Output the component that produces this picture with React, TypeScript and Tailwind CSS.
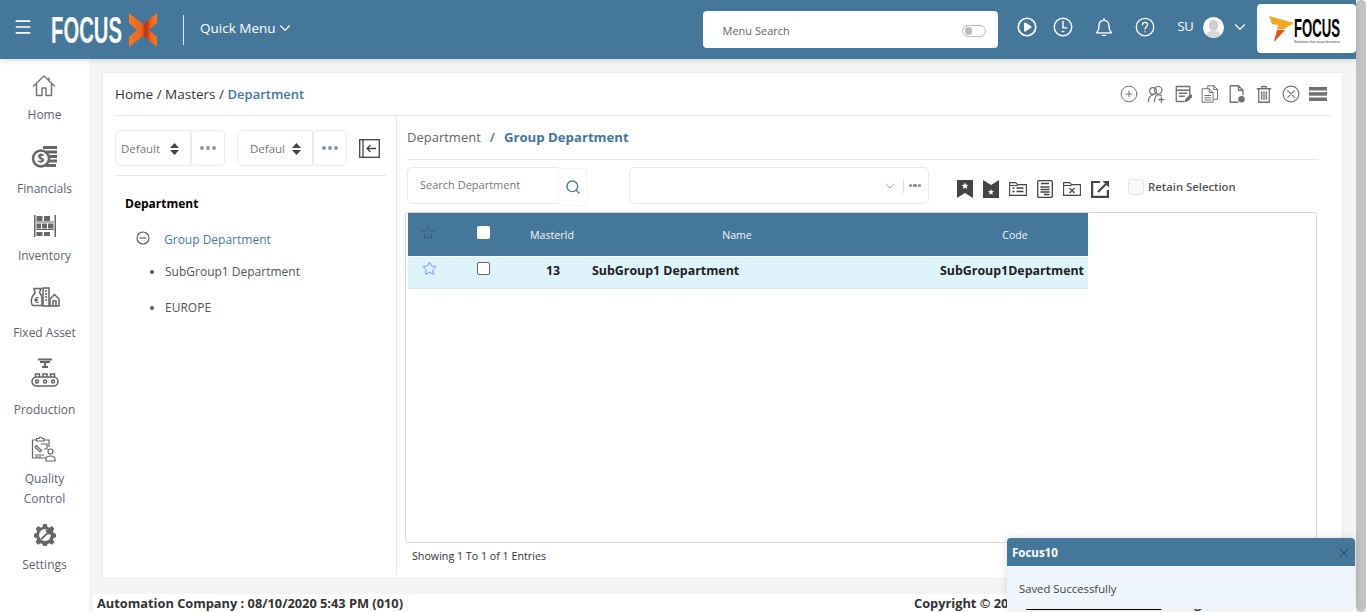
import { ChevronDown, Menu, Search, Star, X } from "lucide-react";
import type { ReactNode } from "react";

const Ico = ({ w = 24, h = 24, vb = "0 0 24 24", sw = 1.5, children }: { w?: number; h?: number; vb?: string; sw?: number; children: ReactNode }) => (
  <svg width={w} height={h} viewBox={vb} fill="none" stroke="currentColor" strokeWidth={sw} strokeLinecap="round" strokeLinejoin="round">
    {children}
  </svg>
);

const HomeIcon = () => (
  <Ico w={26} h={24}>
    <path d="M1.500 12 12 2l10.500 10M4.500 10v11.500h5.500V14h4v7.500h5.500V10M17 4v3" />
  </Ico>
);
const FinancialsIcon = () => (
  <svg width={28} height={24} viewBox="0 0 28 24">
    <g fill="#666">
      <rect x="12" y="1" width="14" height="3" />
      <rect x="15" y="5.500" width="11" height="3" />
      <rect x="18" y="10" width="8" height="3" />
      <rect x="18" y="14.500" width="8" height="3" />
      <rect x="15" y="19" width="10" height="3" />
    </g>
    <circle cx="10" cy="13.500" r="8" fill="#fff" stroke="#666" strokeWidth="2.500" />
    <text x="10" y="18" textAnchor="middle" fontSize="12" fontWeight="700" fill="#666" fontFamily="'Open Sans',sans-serif">$</text>
  </svg>
);
const InventoryIcon = () => (
  <svg width={24} height={24} viewBox="0 0 24 24" fill="#666">
    <rect x="1" y="1" width="1.500" height="22" />
    <rect x="21.500" y="1" width="1.500" height="22" />
    <rect x="3.500" y="2" width="6" height="5" />
    <rect x="11" y="2" width="6" height="5" />
    <rect x="3" y="7.500" width="18" height="1" />
    <rect x="3.500" y="9.500" width="4.500" height="5" />
    <rect x="9" y="9.500" width="5" height="5" />
    <rect x="15" y="9.500" width="5.500" height="5" />
    <rect x="3" y="15" width="18" height="1" />
    <rect x="3.500" y="18" width="6" height="4" />
    <rect x="11" y="18" width="6" height="4" />
  </svg>
);
const FixedAssetIcon = () => (
  <svg width={30} height={20} viewBox="0 0 30 20" fill="none" stroke="#666" strokeWidth="1.500">
    <path d="M4 1.500h7l-1.500 4c2 2 2.500 4 2.500 7v6H3c-2-1-2-5-1-8 .5-2 2-3 3-4.500z" />
    <rect x="13" y="1" width="6" height="18" />
    <path d="M15 4h2M15 7h2M15 10h2M15 13h2" />
    <path d="M20 12l4.500-4.500L29 12v7h-9zM23 14h3v5h-3z" />
    <text x="6.500" y="16" fontSize="8" fontWeight="700" fill="#666" stroke="none" textAnchor="middle" fontFamily="'Open Sans',sans-serif">€</text>
  </svg>
);
const ProductionIcon = () => (
  <svg width={28} height={30} viewBox="0 0 28 30" fill="none" stroke="#666" strokeWidth="1.500">
    <path d="M7 1.500h14M9 4h10M14 4v5M11 9h6" strokeWidth="2" />
    <path d="M4.500 19v-3h4v3M12 19v-3h4v3M19.500 19v-3h4v3" />
    <rect x="1" y="19" width="26" height="9" rx="4.500" />
    <circle cx="6" cy="23.500" r="1.500" />
    <circle cx="14" cy="23.500" r="1.500" />
    <circle cx="22" cy="23.500" r="1.500" />
  </svg>
);
const QualityIcon = () => (
  <svg width={26} height={26} viewBox="0 0 26 26" fill="none" stroke="#666" strokeWidth="1.200">
    <path d="M15 22H1.500V4h4M13 4h5v7" />
    <path d="M5.500 5V2.500h2.500a1.500 1.500 0 0 1 3 0H13V5z" />
    <path d="M4 11l5 5 1.500-1.500-5-5zM4 19h9M4 21h6M10 8h6v5h-3" />
    <circle cx="19.500" cy="15.500" r="2.500" />
    <path d="M15 25v-2c0-2 2-3 4.500-3s4.500 1 4.500 3v2z" />
  </svg>
);
const SettingsIcon = () => (
  <svg width={22} height={22} viewBox="0 0 24 24">
    <path fill="#666" d="M10 0h4l.6 3 2.300 1 2.600-1.700 2.800 2.800L20.600 7.700l1 2.300 2.400.6v3.800l-2.400.6-1 2.300 1.700 2.600-2.800 2.800-2.600-1.700-2.300 1-.6 2h-4l-.6-2-2.300-1-2.600 1.700-2.800-2.800L3.400 17.300l-1-2.300-2.400-.6v-3.800l2.400-.6 1-2.300-1.700-2.600 2.800-2.800L7.100 4l2.300-1z" />
    <circle cx="12" cy="12" r="6.500" fill="#fff" />
    <path d="M8 16.500l6-6M14 7a3.500 3.500 0 0 1 3.500 3.500L15 10z" stroke="#666" strokeWidth="2.200" fill="#666" />
  </svg>
);

const BookmarkStar = () => (
  <svg width={16} height={18} viewBox="0 0 16 18">
    <path fill="#444" d="M0 0h16v18l-8-5-8 5z" />
    <path fill="#fff" d="m8 2.500 1 2.300 2.400.2-1.800 1.600.6 2.400L8 7.700 5.800 9l.6-2.400L4.600 5 7 4.800z" />
  </svg>
);
const BookmarkOut = () => (
  <svg width={16} height={18} viewBox="0 0 16 18">
    <path fill="#444" d="M0 0l8 5 8-5v18H0z" />
    <path fill="#fff" d="m8 9 .8 2 2.200.2-1.700 1.400.5 2.200L8 13.700l-1.800 1.100.5-2.200L5 11.200l2.200-.2z" />
  </svg>
);

const Breadcrumb = () => (
  <div className="flex h-[43px] mx-[12px] shrink-0 items-center justify-between border-b border-[#e8e8e8] pr-[3px]">
    <p className="text-[13.5px] text-[#333]">
      Home / Masters / <span className="font-semibold text-[13px] text-[#45779b]">Department</span>
    </p>
    <div className="flex items-center gap-[9px] text-[#707070] mt-[-1px]">
      <Ico w={18} h={18} sw={1.300}>
        <circle cx="12" cy="12" r="10.500" />
        <path d="M12 8v8M8 12h8" />
      </Ico>
      <Ico w={18} h={18} sw={1.600}>
        <circle cx="15" cy="7" r="5" />
        <circle cx="8" cy="8" r="4.500" />
        <path d="M2 22c0-5 2-8 6-9M10 22c0-4 1-7 4-9 2 0 4 0 5 1M19 16v7M15.500 19.500h7" />
      </Ico>
      <Ico w={18} h={18} sw={1.700}>
        <path d="M13 22H3V2h18v10M3 7h18M7 11h10M7 15h7" />
        <path d="m15 22 1-3 6-6 2 2-6 6z" fill="currentColor" />
      </Ico>
      <Ico w={18} h={18} sw={1.300}>
        <path d="M9 5V1h8l5 5v13h-5M17 1v5h5" />
        <path d="M2 5h9l5 5v13H2zM11 5v5h5M5 14h8M5 17h8M5 20h8" />
      </Ico>
      <Ico w={18} h={18} sw={1.700}>
        <path d="M13 23H3V1h11l6 6v6M14 1v6h6" />
        <circle cx="18" cy="19" r="3.500" fill="currentColor" />
      </Ico>
      <Ico w={18} h={18} sw={1.700}>
        <path d="M3 5h18M9 5V2h6v3M5 5v18h14V5M9 9v10M12 9v10M15 9v10" />
      </Ico>
      <Ico w={18} h={18} sw={1.500}>
        <circle cx="12" cy="12" r="10.500" />
        <path d="m7.500 7.500 9 9M16.500 7.500l-9 9" />
      </Ico>
      <svg width={18} height={14} viewBox="0 0 18 14" fill="#707070">
        <rect width="18" height="3.500" />
        <rect y="5.200" width="18" height="3.500" />
        <rect y="10.500" width="18" height="3.500" />
      </svg>
    </div>
  </div>
);

const Dots = () => (
  <div className="flex w-[34px] h-[36px] items-center justify-center gap-[2px] rounded-[5px] border border-[#e6ebf1]">
    <span className="w-[4px] h-[4px] rounded-full bg-[#8a97a8]" />
    <span className="w-[4px] h-[4px] rounded-full bg-[#8a97a8]" />
    <span className="w-[4px] h-[4px] rounded-full bg-[#8a97a8]" />
  </div>
);

const TreePanel = () => (
  <div className="w-[294px] shrink-0 border-r border-[#e8e8e8] pr-[10px] pl-[12px]">
    <div className="flex items-center h-[60px] pt-[14px] pb-[9px] border-b border-[#e8e8e8]">
      <div className="flex w-[76px] h-[36px] items-center justify-between pl-[5px] pr-[11px] pt-px rounded-l-[5px] border border-[#e6ebf1] text-[11.5px] text-[#777]">
        Default
        <svg width={9} height={12} viewBox="0 0 9 12" fill="#444">
          <path d="M4.500 0 9 5H0zM4.500 12 0 7h9z" />
        </svg>
      </div>
      <Dots />
      <div className="flex w-[76px] h-[36px] ml-[12px] items-center justify-between pl-[12px] pr-[11px] pt-px rounded-l-[5px] border border-[#e6ebf1] text-[11.5px] text-[#777]">
        Defaul
        <svg width={9} height={12} viewBox="0 0 9 12" fill="#444">
          <path d="M4.500 0 9 5H0zM4.500 12 0 7h9z" />
        </svg>
      </div>
      <Dots />
      <svg className="ml-[12px]" width={21} height={19} viewBox="0 0 21 19" fill="none" stroke="#444" strokeWidth="1.300">
        <rect x=".7" y=".7" width="19.600" height="17.600" />
        <path d="M4 1v17M17 9.500H8M11.500 6 8 9.500l3.500 3.500" />
      </svg>
    </div>
    <p className="mt-[20px] ml-[10px] text-[12px] font-bold leading-[16px] text-black">Department</p>
    <div className="flex items-center mt-[20px] ml-[21px] gap-[14px] text-[12px] leading-[16px] text-[#4a7a9c]">
      <svg className="mt-[-5px]" width={14} height={14} viewBox="0 0 14 14" fill="none" stroke="#555" strokeWidth="1.100">
        <circle cx="7" cy="7" r="6" />
        <path d="M3.500 7h7" />
      </svg>
      Group Department
    </div>
    <ul className="mt-[16px] ml-[35px] text-[12px] leading-[16px] text-[#555] list-disc list-outside pl-[15px] marker:text-[#555]">
      <li>SubGroup1 Department</li>
      <li className="mt-[20px]">EUROPE</li>
    </ul>
  </div>
);

const Toolbar = () => (
  <div className="flex items-center mt-[7px] h-[38px]">
    <div className="flex w-[151px] h-[37px] mt-[-1px] items-center pl-[12px] rounded-l-[5px] border border-[#e6ebf1] border-r-0 text-[11px] text-[#777]">
      Search Department
    </div>
    <div className="flex w-[29px] h-[38px] mt-[1px] items-center justify-center border border-[#f3f5f8] text-[#45779b]">
      <Search size={16} strokeWidth={2} />
    </div>
    <div className="flex w-[300px] h-[37px] mt-[-1px] ml-[42px] items-center justify-end rounded-[5px] border border-[#e6ebf1] pr-[6px]">
      <ChevronDown size={16} strokeWidth={1} className="text-[#777]" />
      <span className="w-px h-[14px] mx-[5px] bg-[#ddd]" />
      <span className="flex gap-[1px] pr-[1px]">
        <span className="w-[3.500px] h-[3.500px] rounded-full bg-[#888]" />
        <span className="w-[3.500px] h-[3.500px] rounded-full bg-[#888]" />
        <span className="w-[3.500px] h-[3.500px] rounded-full bg-[#888]" />
      </span>
    </div>
    <div className="flex ml-[28px] items-center gap-[10px] mt-[6px]">
      <BookmarkStar />
      <BookmarkOut />
      <svg width={18} height={14} viewBox="0 0 18 14" fill="none" stroke="#444" strokeWidth="1.100">
        <path d="M.6 13.400V.6h6l2 2h8.800v10.800zM.6 3.500h8" />
        <path d="M3.500 6h2M3.500 9.500h2M7.500 6h7M7.500 9.500h7" strokeWidth="1.400" />
      </svg>
      <svg width={16} height={18} viewBox="0 0 16 18" fill="none" stroke="#444" strokeWidth="1.300">
        <rect x=".7" y=".7" width="14.600" height="16.600" rx="1" />
        <path d="M4 3.500h8M3.500 7h9M3.500 9.500h9M3.500 12h9M7 14.500h5.500" />
      </svg>
      <svg width={18} height={14} viewBox="0 0 18 14" fill="none" stroke="#444" strokeWidth="1.100">
        <path d="M.6 13.400V.6h6l2 2h8.800v10.800zM.6 3.500h8" />
        <path d="m6.500 6 5 5M11.500 6l-5 5" />
      </svg>
      <svg width={19} height={18} viewBox="0 0 19 18" fill="none" stroke="#444" strokeWidth="2.200">
        <path d="M9 2H1.100v14.900h15.800V10" />
        <path d="M7 12 16 3" />
        <path d="M11.500 1H18v6.500z" fill="#444" stroke="none" />
      </svg>
    </div>
    <div className="ml-[18px] mt-[2px] w-[16px] h-[16px] rounded-[3px] border border-[#e6e6e6] bg-[#f8f8f8]" />
    <span className="ml-[4px] mt-[2px] text-[11.300px] font-semibold text-[#555]">Retain Selection</span>
  </div>
);

const Grid = () => (
  <div className="mt-[7px] ml-[-2px] mr-[1px] h-[331px] rounded-[3px] border border-[#d8d8d8] pl-[2px]">
    <div className="w-[680px]">
      <div className="flex h-[43px] items-center bg-[#45779b] text-[10.600px] text-[#f2f6f9]">
        <div className="flex w-[40px] justify-center mt-[-4px] text-[#2f4a60]">
          <Star size={14} strokeWidth={1} />
        </div>
        <div className="flex w-[70px] justify-center mt-[-4px]">
          <span className="w-[13px] h-[13px] rounded-[2px] bg-white" />
        </div>
        <div className="w-[68px] text-center pt-[2px]">MasterId</div>
        <div className="w-[302px] text-center pt-[2px]">Name</div>
        <div className="flex-1 text-center pl-[54px] pt-[2px]">Code</div>
      </div>
      <div className="flex h-[32px] mt-px items-center bg-[#dff3fb] border-b border-[#dde3e6] text-[12.400px] font-bold text-[#222]">
        <div className="flex w-[43px] justify-center mt-[-8px] text-[#3d6df0]">
          <Star size={15} strokeWidth={1.100} />
        </div>
        <div className="flex w-[64px] justify-center mt-[-8px]">
          <span className="w-[13px] h-[13px] rounded-[2px] bg-white border border-[#666]" />
        </div>
        <div className="w-[76px] text-center mt-[-3px]">13</div>
        <div className="w-[250px] ml-[1px] mt-[-3px]">SubGroup1 Department</div>
        <div className="flex-1 text-right pr-[4px] mt-[-3px]">SubGroup1Department</div>
      </div>
    </div>
  </div>
);

const navItems = [
  { label: ["Home"], icon: <HomeIcon />, box: "mt-[12px] gap-[4px]" },
  { label: ["Financials"], icon: <FinancialsIcon />, box: "mt-[17px] gap-[7px]" },
  { label: ["Inventory"], icon: <InventoryIcon />, box: "mt-[12px] gap-[5px]" },
  { label: ["Fixed Asset"], icon: <FixedAssetIcon />, box: "mt-[16px] gap-[11px]" },
  { label: ["Production"], icon: <ProductionIcon />, box: "mt-[15px] gap-[12px]" },
  { label: ["Quality", "Control"], icon: <QualityIcon />, box: "mt-[14px] gap-[5px]" },
  { label: ["Settings"], icon: <SettingsIcon />, box: "mt-[11px] gap-[5px]" },
];

export default function App() {
  return (
    <div className="relative flex w-[1366px] h-[612px] overflow-hidden bg-[#f4f6f6] font-['Open_Sans',sans-serif]">
      <div className="flex flex-col w-[1356px]">
        <header className="relative z-10 flex h-[59px] shrink-0 items-center bg-[#45779b] text-white shadow-[0_2px_5px_rgba(0,0,0,0.12)]">
          <Menu size={20} strokeWidth={2} className="ml-[13px] mt-[-5px]" />
          <svg className="ml-[18px] overflow-visible" width={107} height={34} viewBox="0 0 107 34">
            <defs>
              <linearGradient id="xlogo" x1="0" x2="1" y1="0" y2="0">
                <stop offset="0" stopColor="#f47a20" />
                <stop offset=".45" stopColor="#e8641f" />
                <stop offset=".6" stopColor="#b5301c" />
                <stop offset=".8" stopColor="#ee6a20" />
                <stop offset="1" stopColor="#f47a20" />
              </linearGradient>
            </defs>
            <text x="0" y="30" fontSize="36" fontWeight="700" fill="#fff" textLength="71" lengthAdjust="spacingAndGlyphs" fontFamily="'Liberation Sans',sans-serif">FOCUS</text>
            <path fill="url(#xlogo)" d="M78 0l14 11 14-11v10l-8 7 8 7v10l-14-11-14 11v-10l8-7-8-7z" />
          </svg>
          <span className="w-px h-[30px] ml-[25px] bg-white/80" />
          <span className="ml-[16px] mt-[-3px] text-[13.500px] whitespace-nowrap">Quick Menu</span>
          <ChevronDown size={18} strokeWidth={1.500} className="mt-[-3px]" />
          <div className="flex w-[295px] h-[37px] ml-[409px] mt-[-1px] items-center justify-between pt-[4px] pl-[20px] pr-[12px] rounded-[4px] bg-white text-[11px] text-[#666]">
            Menu Search
            <span className="flex items-center w-[24px] h-[12px] px-[2px] rounded-full border border-[#bbb]">
              <span className="w-[7px] h-[8px] rounded-full bg-[#bbb]" />
            </span>
          </div>
          <div className="flex items-center mt-[-5px] ml-[19px]">
            <Ico w={20} h={20} sw={2}>
              <circle cx="12" cy="12" r="10.500" />
              <path d="M9.500 7.500 16.500 12l-7 4.500z" fill="currentColor" />
            </Ico>
            <span className="ml-[16px]">
              <Ico w={20} h={20} sw={1.700}>
                <circle cx="12" cy="12" r="10.500" />
                <path d="M12 5v8h4.500M11 17.500h2" />
              </Ico>
            </span>
            <span className="ml-[21px]">
              <Ico w={20} h={20} sw={1.700}>
                <path d="M3 19c2-2 3-4 3-8s1-7 6-7 6 3 6 7 1 6 3 8zM10 22h4M12 2v2" />
              </Ico>
            </span>
            <span className="ml-[21px]">
              <Ico w={20} h={20} sw={1.500}>
                <circle cx="12" cy="12" r="10.500" />
                <path d="M9 9.500c0-2 1.300-3 3-3s3 1.200 3 2.800c0 2.500-3 2.700-3 5.200M12 17.500v.3" />
              </Ico>
            </span>
            <span className="ml-[23px] text-[13px] tracking-tight">SU</span>
            <span className="relative ml-[9px] w-[21px] h-[21px] overflow-hidden rounded-full bg-white">
              <span className="absolute left-[6px] top-[3px] w-[9px] h-[11px] rounded-full bg-[#cfcfcf]" />
              <span className="absolute left-[3px] top-[14px] w-[15px] h-[10px] rounded-full bg-[#d9d9d9]" />
            </span>
            <ChevronDown size={18} strokeWidth={1.500} className="ml-[7px]" />
          </div>
          <div className="ml-[8px] mt-[-2px] h-[49px] w-[99px] rounded-[4px] bg-white">
            <svg className="overflow-visible" width={99} height={49} viewBox="0 0 99 49">
              <path fill="#f6a623" d="M12 12 37 19 27 25H20L21 21 15 20Z" />
              <path fill="#ea4f22" d="M20 26H28L18 37H17Z" />
              <g transform="translate(37 33) scale(.505 1)">
                <text x="0" y="0" fontSize="26" fontWeight="700" fill="#000" fontFamily="'Liberation Sans',sans-serif">FOCUS</text>
              </g>
              <text x="37" y="39" fontSize="4" fill="#444" textLength="46" lengthAdjust="spacingAndGlyphs" fontFamily="'Liberation Sans',sans-serif">Solutions that mean business</text>
            </svg>
          </div>
        </header>
        <div className="flex flex-1 min-h-0">
          <nav className="flex w-[89px] shrink-0 flex-col items-center bg-white text-[12px] leading-[20px] text-[#62636e]">
            {navItems.map((n) => (
              <div key={n.label[0]} className={`flex flex-col items-center ${n.box}`}>
                <div className="flex h-[30px] items-center justify-center text-[#777]">{n.icon}</div>
                <div className="text-center">
                  {n.label.map((l) => (
                    <div key={l}>{l}</div>
                  ))}
                </div>
              </div>
            ))}
          </nav>
          <div className="flex flex-1 min-w-0 flex-col">
            <main className="flex h-[507px] mt-[13px] ml-[13px] mr-[13px] flex-col border border-[#ececec] bg-white">
              <Breadcrumb />
              <div className="flex flex-1 min-h-0 pb-[3px]">
                <TreePanel />
                <section className="flex-1 min-w-0 pl-[10px] pr-[24px]">
                  <div className="flex h-[44px] items-center border-b border-[#e8e8e8] text-[13px] text-[#666]">
                    Department
                    <span className="mx-[9px] font-semibold text-[#45779b]">/</span>
                    <span className="font-bold text-[13.200px] text-[#45779b]">Group Department</span>
                  </div>
                  <Toolbar />
                  <Grid />
                  <p className="mt-[6px] ml-[5px] text-[10.700px] leading-[14px] text-[#333]">Showing 1 To 1 of 1 Entries</p>
                </section>
              </div>
            </main>
            <footer className="flex h-[18px] mt-auto ml-[4px] items-center bg-white pl-[4px] pt-[2px] text-[12.800px] font-bold text-[#333] whitespace-nowrap">
              Automation Company : 08/10/2020 5:43 PM (010)
              <span className="ml-[511px]">
                Copyright © 2020 <span className="underline text-black">Focus Softnet Pvt Ltd</span> All rights reserved
              </span>
            </footer>
          </div>
        </div>
      </div>
      <div className="w-[10px] h-full rounded-[5px] bg-[#c2c2c2]" />
      <div className="absolute left-[1007px] top-[538px] z-20 w-[348px] h-[71px] overflow-hidden rounded-[4px] bg-[#eef5fc] shadow-[0_0_8px_rgba(0,0,0,0.15)]">
        <div className="flex h-[28px] items-center justify-between bg-[#45779b] pt-[2px] pl-[5px] pr-[3px] text-[11.500px] font-bold text-white">
          Focus10
          <X size={16} strokeWidth={1.200} className="text-[#1f3547]" />
        </div>
        <p className="mt-[15px] ml-[12px] text-[11.300px] leading-[16px] text-[#444]">Saved Successfully</p>
      </div>
    </div>
  );
}
